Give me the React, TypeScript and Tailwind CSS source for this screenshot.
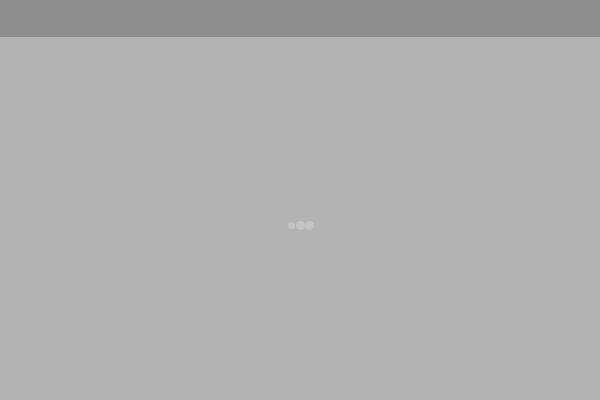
import React from "react";

export default function App() {
  return (
    <div className="w-[600px] h-[400px] flex flex-col bg-[#b3b3b3] overflow-hidden">
      <div className="h-[37px] shrink-0 bg-[#8e8e8e]" />
      <div className="flex-1 flex items-center justify-center pt-[13px]">
        <div className="flex items-center gap-0 pl-[1px]">
          <span className="w-[7px] h-[7px] rounded-full bg-[#c2c2c2] mr-[1px]" />
          <span className="w-[9px] h-[9px] rounded-full bg-[#c4c4c4]" />
          <span className="w-[9px] h-[9px] rounded-full bg-[#c4c4c4]" />
        </div>
      </div>
    </div>
  );
}
